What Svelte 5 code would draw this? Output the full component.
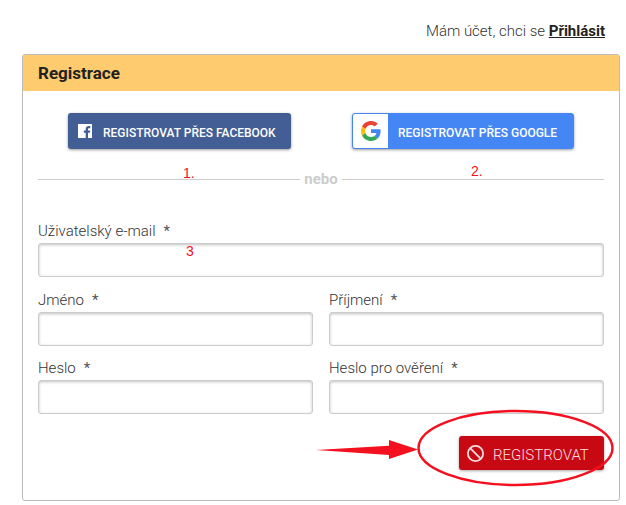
<script lang="ts">
	const fields = [
		{ label: 'Uživatelský e-mail', wide: true },
		{ label: 'Jméno' },
		{ label: 'Příjmení' },
		{ label: 'Heslo' },
		{ label: 'Heslo pro ověření' }
	];
</script>

<div class="page">
	<p class="login">Mám účet, chci se <a href="#login">Přihlásit</a></p>

	<section class="card">
		<h2 class="card-title">Registrace</h2>

		<div class="card-body">
			<div class="social">
				<button class="btn-social facebook" type="button">
					<svg class="fb-icon" viewBox="0 0 16 16" width="16" height="16" aria-hidden="true">
						<path
							fill="#fff"
							d="M1.200 1h13.600c.1 0 .2.1.2.2v13.600c0 .1-.1.2-.2.2H11V9.700h1.900l.3-2.200H11V6.200c0-.6.2-1 1.100-1h1.200V3.200c-.2 0-.9-.1-1.700-.1-1.700 0-2.900 1-2.900 2.900v1.500H6.800v2.200h1.900V15H1.200c-.1 0-.2-.1-.2-.2V1.200c0-.1.1-.2.2-.2z"
						/>
					</svg>
					<span class="btn-text">REGISTROVAT PŘES FACEBOOK</span>
				</button>

				<button class="btn-social google" type="button">
					<span class="g-box">
						<svg viewBox="0 0 48 48" width="20" height="20" aria-hidden="true">
							<path fill="#ea4335" d="M24 9.500c3.500 0 6.700 1.200 9.200 3.600l6.900-6.900C35.900 2.400 30.500 0 24 0 14.600 0 6.500 5.400 2.600 13.200l8 6.200C12.500 13.600 17.800 9.500 24 9.500z" />
							<path fill="#4285f4" d="M47 24.500c0-1.600-.1-3.100-.4-4.500H24v9h12.900c-.6 3-2.200 5.500-4.800 7.200l7.700 6C44.300 38 47 31.800 47 24.500z" />
							<path fill="#fbbc05" d="M10.600 28.600c-.5-1.400-.8-3-.8-4.600s.3-3.200.8-4.600l-8-6.200C.9 16.500 0 20.100 0 24s.9 7.500 2.600 10.800l8-6.200z" />
							<path fill="#34a853" d="M24 48c6.500 0 11.900-2.100 15.800-5.800l-7.700-6c-2.100 1.400-4.900 2.300-8.100 2.300-6.200 0-11.500-4.100-13.400-9.900l-8 6.200C6.500 42.600 14.600 48 24 48z" />
						</svg>
					</span>
					<span class="btn-text g-text">REGISTROVAT PŘES GOOGLE</span>
				</button>
			</div>

			<div class="divider"><span>nebo</span></div>

			<form class="fields">
				{#each fields as field}
					<label class="field" class:wide={field.wide}>
						<span class="field-label">{field.label}<i>*</i></span>
						<input type="text" />
					</label>
				{/each}
			</form>

			<div class="actions">
				<button class="btn-submit" type="button">
					<svg viewBox="0 0 20 20" width="19" height="19" fill="none" stroke="#f6dfe1" stroke-width="1.9" aria-hidden="true">
						<circle cx="10" cy="10" r="8" />
						<path d="M4.400 4.400l11.200 11.200" />
					</svg>
					<span class="submit-text">REGISTROVAT</span>
				</button>
			</div>
		</div>
	</section>

	<!-- red annotations drawn over the screenshot -->
	<span class="note note-1">1.</span>
	<span class="note note-2">2.</span>
	<span class="note note-3">3</span>
	<svg class="markup" viewBox="0 0 626 505" width="626" height="505" aria-hidden="true">
		<ellipse cx="515.500" cy="448" rx="97" ry="37" fill="none" stroke="#f5101f" stroke-width="2.500" />
		<path fill="#f5101f" d="M316 450L389 445.700V440L418 449.500L389 459V455z" />
	</svg>
</div>

<style>
	:global(body) {
		margin: 0;
		background: #fff;
	}

	.page {
		position: relative;
		width: 626px;
		height: 505px;
		box-sizing: border-box;
		padding: 0 6px 0 22px;
		overflow: hidden;
		font-family: Roboto, 'Liberation Sans', sans-serif;
		color: #333;
	}

	.login {
		margin: 0;
		height: 54px;
		box-sizing: border-box;
		padding: 22px 15px 0 0;
		text-align: right;
		font-size: 15px;
		line-height: 18px;
		font-weight: 300;
	}

	.login a {
		color: #222;
		font-weight: 700;
	}

	.card {
		width: 598px;
		height: 447px;
		box-sizing: border-box;
		border: 1px solid #bbb;
		border-radius: 3px;
	}

	.card-title {
		margin: 0;
		height: 36px;
		padding: 0 15px;
		background: #fecb6e;
		font-size: 17px;
		line-height: 36px;
		font-weight: 700;
		color: #222;
	}

	.card-body {
		padding: 0 15px;
	}

	.social {
		display: flex;
		padding: 22px 30px 0 30px;
		justify-content: space-between;
	}

	.btn-social {
		display: flex;
		align-items: center;
		width: 223px;
		height: 36px;
		padding: 0;
		border: 0;
		border-radius: 3px;
		font-family: inherit;
		font-size: 12px;
		font-weight: 500;
		color: #fff;
		box-shadow: 0 1px 3px rgba(0, 0, 0, 0.4);
	}

	.btn-text {
		padding-top: 4px;
	}

	.facebook {
		background: #425e94;
	}

	.fb-icon {
		margin: 0 10px 0 9px;
	}

	.google {
		width: 222px;
		background: #4486f4;
		border: 1px solid #4486f4;
		box-sizing: border-box;
	}

	.g-box {
		display: flex;
		align-items: center;
		justify-content: center;
		width: 35px;
		height: 34px;
		background: #fff;
		border-radius: 2px 0 0 2px;
	}

	.g-text {
		margin-left: 10px;
	}

	.divider {
		display: flex;
		align-items: center;
		gap: 4px;
		margin-top: 20px;
		font-size: 15px;
		line-height: 20px;
		font-weight: 700;
		color: #ccc;
	}

	.divider::before,
	.divider::after {
		content: '';
		flex: 1;
		height: 1px;
		background: #ccc;
	}

	.fields {
		display: grid;
		grid-template-columns: 1fr 1fr;
		column-gap: 16px;
		row-gap: 12.5px;
		margin-top: 32px;
	}

	.field {
		display: block;
	}

	.field.wide {
		grid-column: 1 / -1;
	}

	.field-label {
		display: block;
		height: 22px;
		font-size: 15px;
		line-height: 20px;
		font-weight: 300;
	}

	.field-label i {
		margin-left: 8px;
		font-style: normal;
		font-weight: 400;
		color: #555;
	}

	.field input {
		display: block;
		width: 100%;
		height: 34px;
		box-sizing: border-box;
		border: 1px solid #ccc;
		border-radius: 3px;
		background: #fff;
		box-shadow: inset 0 1px 3px rgba(0, 0, 0, 0.25);
	}

	.actions {
		display: flex;
		justify-content: flex-end;
		margin-top: 22px;
	}

	.btn-submit {
		display: flex;
		align-items: center;
		gap: 8px;
		width: 145px;
		height: 34px;
		padding: 0 0 0 7px;
		border: 0;
		border-radius: 3px;
		background: #c80813;
		font-family: inherit;
		font-size: 15px;
		font-weight: 300;
		color: #f6dfe1;
		box-shadow: 0 1px 3px rgba(0, 0, 0, 0.35);
	}

	.submit-text {
		padding-top: 3px;
	}

	.note {
		position: absolute;
		font-family: 'Liberation Sans', sans-serif;
		font-size: 14px;
		line-height: 16px;
		color: #f5101f;
	}

	.note-1 {
		left: 183px;
		top: 165px;
	}

	.note-2 {
		left: 471px;
		top: 163px;
	}

	.note-3 {
		left: 186px;
		top: 243px;
	}

	.markup {
		position: absolute;
		left: 0;
		top: 0;
		pointer-events: none;
	}
</style>
